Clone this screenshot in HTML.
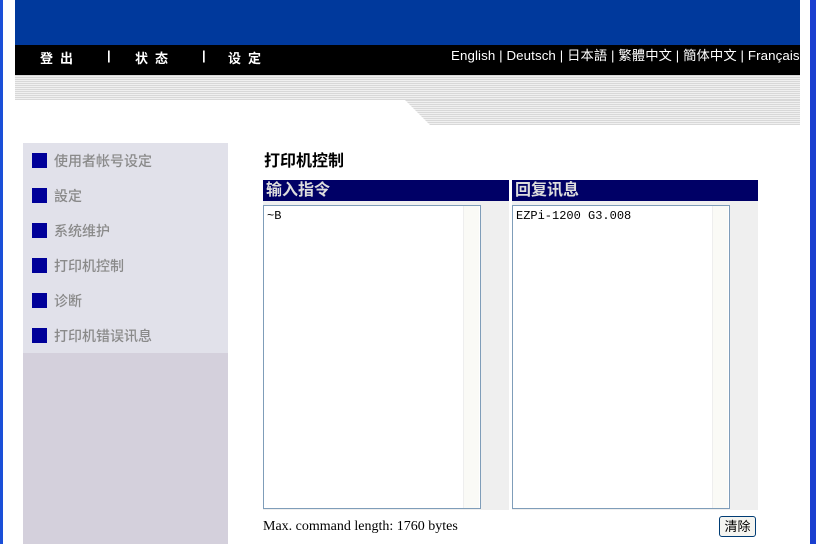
<!DOCTYPE html>
<html><head><meta charset="utf-8"><style>
body{margin:0;width:816px;height:544px;overflow:hidden;background:#fff;position:relative;font-family:"Liberation Sans","Noto Sans CJK SC",sans-serif}
div{position:absolute;box-sizing:border-box}
.cj{font-family:"Noto Sans CJK SC","WenQuanYi Zen Hei",sans-serif}
.stripe{background:repeating-linear-gradient(#d8d8d8 0 1px,#f0f0f0 1px 2px)}
.mi{left:32px;font-size:14px;color:#8a8a8a;font-weight:500}
.mi b{position:absolute;left:0;top:2px;width:15px;height:15px;background:#000099}
.mi span{position:absolute;left:22px;top:0;white-space:nowrap}
.sb{width:16px;background:#fafaf6;border-left:1px solid #eee}
.ta{border:1px solid #7f9db9;background:#fff;font-family:"Liberation Mono","Noto Sans CJK SC",monospace;font-size:12px;padding:3px}
.nv{top:48px;color:#fff;font-size:13px;font-weight:bold;letter-spacing:7px;white-space:nowrap}
</style></head><body>
<div style="left:0;top:0;width:3px;height:544px;background:#1a4fd8"></div>
<div style="left:810px;top:0;width:6px;height:544px;background:#1a3fd0"></div>
<div style="left:15px;top:0;width:785px;height:45px;background:#00399c"></div>
<div style="left:15px;top:45px;width:785px;height:30px;background:#000"></div>
<div class="nv cj" style="left:40px">登出</div>
<div class="nv" style="left:107px">|</div>
<div class="nv cj" style="left:135px">状态</div>
<div class="nv" style="left:202px">|</div>
<div class="nv cj" style="left:228px">设定</div>
<div style="left:451px;top:45px;color:#fff;font-size:13.3px;white-space:nowrap;letter-spacing:0.1px">English | Deutsch | 日本語 | 繁體中文 | 簡体中文 | Français</div>
<div class="stripe" style="left:15px;top:75px;width:785px;height:25px"></div>
<div class="stripe" style="left:405px;top:100px;width:395px;height:25px;clip-path:polygon(0 0,100% 0,100% 100%,25px 100%)"></div>
<div style="left:23px;top:143px;width:205px;height:210px;background:#e1e1ea"></div>
<div style="left:23px;top:353px;width:205px;height:191px;background:#d4d0dc"></div>
<div class="mi" style="top:151px"><b></b><span>使用者帐号设定</span></div>
<div class="mi" style="top:186px"><b></b><span>設定</span></div>
<div class="mi" style="top:221px"><b></b><span>系统维护</span></div>
<div class="mi" style="top:256px"><b></b><span>打印机控制</span></div>
<div class="mi" style="top:291px"><b></b><span>诊断</span></div>
<div class="mi" style="top:326px"><b></b><span>打印机错误讯息</span></div>
<div style="left:264px;top:147px;font-size:16px;font-weight:bold;color:#000">打印机控制</div>
<div style="left:263px;top:180px;width:246px;height:21px;background:#000066;color:#ddd;font-size:16px;font-weight:bold;padding-left:3px;line-height:21px">输入指令</div>
<div style="left:512px;top:180px;width:246px;height:21px;background:#000066;color:#ddd;font-size:16px;font-weight:bold;padding-left:3px;line-height:21px">回复讯息</div>
<div style="left:263px;top:201px;width:495px;height:309px;background:#efefef"></div>
<div style="left:509px;top:201px;width:3px;height:309px;background:#fff"></div>
<div class="ta" style="left:263px;top:205px;width:218px;height:304px">~B</div>
<div class="sb" style="left:463px;top:206px;height:302px"></div>
<div class="ta" style="left:512px;top:205px;width:218px;height:304px">EZPi-1200 G3.008</div>
<div class="sb" style="left:712px;top:206px;height:302px"></div>
<div style="left:263px;top:519px;font-family:'Liberation Serif',serif;font-size:14px">Max. command length: 1760 bytes</div>
<div style="left:719px;top:516px;width:37px;height:21px;border:1px solid #003c74;border-radius:3px;background:#f4f4f0;font-size:13px;text-align:center;line-height:19px">清除</div>
</body></html>
